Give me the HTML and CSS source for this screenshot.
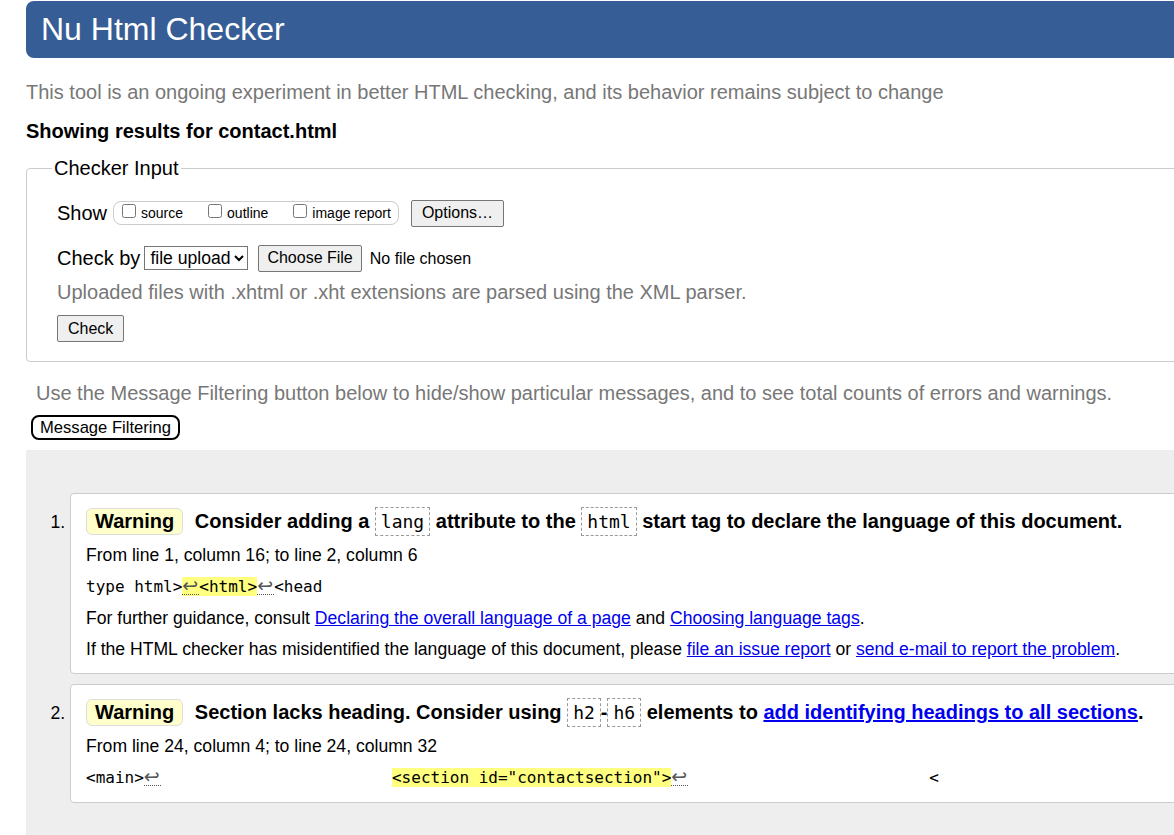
FILE: index.html
```html
<!DOCTYPE html>
<html>
<head>
<meta charset="utf-8">
<title>Nu Html Checker</title>
<link rel="stylesheet" href="styles.css">
</head>
<body>
<div class="page">
  <h1 class="banner">Nu Html Checker</h1>
  <p class="intro">This tool is an ongoing experiment in better HTML checking, and its behavior remains subject to change</p>
  <p class="showing">Showing results for contact.html</p>

  <fieldset class="input-box">
    <legend>Checker Input</legend>
    <div class="row show-row">
      <span class="row-label">Show</span>
      <span class="opts">
        <label><input type="checkbox"> source</label>
        <label><input type="checkbox"> outline</label>
        <label><input type="checkbox"> image report</label>
      </span>
      <button class="btn">Options…</button>
    </div>
    <div class="row check-row">
      <span class="row-label">Check by</span>
      <select class="sel"><option>file upload</option></select>
      <input type="file" class="file">
    </div>
    <p class="hint">Uploaded files with .xhtml or .xht extensions are parsed using the XML parser.</p>
    <button class="btn">Check</button>
  </fieldset>

  <p class="filter-note">Use the Message Filtering button below to hide/show particular messages, and to see total counts of errors and warnings.</p>
  <button class="mf-btn">Message Filtering</button>

  <div class="results">
    <ol class="msgs">
      <li class="msg">
        <p class="msg-title"><strong class="badge">Warning</strong> <span class="text">Consider adding a <code>lang</code> attribute to the <code>html</code> start tag to declare the language of this document.</span></p>
        <p class="loc">From line 1, column 16; to line 2, column 6</p>
        <p class="extract"><code>type html&gt;<b class="hl"><span class="lf">↩</span>&lt;html&gt;</b><span class="lf">↩</span>&lt;head</code></p>
        <p class="info">For further guidance, consult <a href="#">Declaring the overall language of a page</a> and <a href="#">Choosing language tags</a>.</p>
        <p class="info">If the HTML checker has misidentified the language of this document, please <a href="#">file an issue report</a> or <a href="#">send e-mail to report the problem</a>.</p>
      </li>
      <li class="msg">
        <p class="msg-title"><strong class="badge">Warning</strong> <span class="text">Section lacks heading. Consider using <code>h2</code>-<code>h6</code> elements to <a href="#">add identifying headings to all sections</a>.</span></p>
        <p class="loc">From line 24, column 4; to line 24, column 32</p>
        <p class="extract"><code>&lt;main&gt;<span class="lf">↩</span>                        <b class="hl">&lt;section id="contactsection"&gt;</b><span class="lf">↩</span>                         &lt;</code></p>
      </li>
    </ol>
  </div>
</div>
</body>
</html>
```

FILE: styles.css
```css
html {
  overflow: hidden;
}
body {
  margin: 0;
  font-family: "Liberation Sans", Arial, sans-serif;
  color: #000;
  background: #fff;
}
.page {
  width: 1300px;
  padding-left: 26px;
}
.banner {
  margin: 1px 0 0 0;
  height: 57px;
  line-height: 56px;
  background: #365d95;
  color: #fff;
  font-weight: normal;
  font-size: 32px;
  padding-left: 15px;
  border-radius: 8px;
}
.intro {
  margin: 22px 0 0 0;
  font-size: 20px;
  line-height: 24px;
  color: #777;
}
.showing {
  margin: 15px 0 0 0;
  font-size: 20px;
  line-height: 24px;
  font-weight: bold;
}
.input-box {
  margin: 13px 0 0 0;
  padding: 19px 30px 19px 30px;
  border: 1px solid #ccc;
  border-radius: 4px;
}
.input-box legend {
  font-size: 20px;
  padding: 0 2px;
  margin-left: -5px;
  line-height: 24px;
}
.row {
  display: flex;
  align-items: center;
}
.row-label {
  font-size: 20px;
  margin-right: 6px;
}
.show-row {
  height: 28px;
}
.opts {
  display: flex;
  align-items: center;
  border: 1px solid #ccc;
  border-radius: 8px;
  height: 22px;
  padding: 0 7px 0 8px;
  gap: 25px;
  font-size: 14px;
}
.opts label {
  display: flex;
  align-items: center;
}
.opts input {
  width: 14px;
  height: 14px;
  margin: 0 5px 5px 0;
}
.btn {
  font-family: "Liberation Sans", Arial, sans-serif;
  font-size: 16px;
  height: 27px;
  padding: 0 10px;
  border: 1px solid #767676;
  border-radius: 2px;
  background: #efefef;
  color: #000;
}
.show-row .btn {
  margin-left: 12px;
}
.check-row {
  margin-top: 18px;
  height: 26px;
}
.sel {
  font-family: "Liberation Sans", Arial, sans-serif;
  font-size: 17.6px;
  height: 24px;
  padding: 0 0 0 1px;
  border: 1px solid #767676;
  border-radius: 0;
  background: #fff;
  margin-right: 10px;
  margin-left: -2px;
}
.file {
  font-family: "Liberation Sans", Arial, sans-serif;
  font-size: 16px;
}
.file::file-selector-button {
  font-family: "Liberation Sans", Arial, sans-serif;
  font-size: 16px;
  height: 27px;
  padding: 0 8px;
  margin-right: 8px;
  border: 1px solid #767676;
  border-radius: 2px;
  background: #efefef;
}
.hint {
  margin: 9px 0 11px 0;
  font-size: 20px;
  line-height: 24px;
  color: #777;
}
.filter-note {
  margin: 19px 0 0 10px;
  font-size: 20px;
  line-height: 24px;
  color: #777;
}
.mf-btn {
  display: block;
  margin: 10px 0 0 5px;
  font-family: "Liberation Sans", Arial, sans-serif;
  font-size: 16.6px;
  height: 25px;
  padding: 0 7px;
  background: #fff;
  border: 2px solid #000;
  border-radius: 8px;
  color: #000;
}
.results {
  margin-top: 10px;
  background: #eee;
  padding: 43px 0 40px 0;
  min-height: 400px;
}
.msgs {
  margin: 0;
  padding: 0 0 0 44px;
}
.msg {
  background: #fff;
  border: 1px solid #ccc;
  border-radius: 4px;
  padding: 12px 15px 14px 15px;
  margin-bottom: 10px;
  font-size: 17.6px;
}
.msg::marker {
  font-family: "Liberation Sans", Arial, sans-serif;
  font-size: 17.6px;
}
.msg p {
  margin: 0;
}
.msg-title {
  font-size: 20px;
  line-height: 30px;
  font-weight: bold;
}
.badge {
  display: inline-block;
  background: #ffffcc;
  border: 1px solid #ddd;
  border-radius: 6px;
  padding: 0 8px;
  line-height: 25px;
  margin-right: 6px;
}
.msg-title code {
  font-family: "DejaVu Sans Mono", monospace;
  font-weight: normal;
  font-size: 18px;
  border: 1px dashed #999;
  padding: 3px 5px;
}
.msg-title a {
  color: #0000ee;
}
.loc {
  margin-top: 8px !important;
  line-height: 20px;
}
.extract {
  margin-top: 11px !important;
  line-height: 20px;
  white-space: pre;
}
.extract code {
  font-family: "DejaVu Sans Mono", monospace;
  font-size: 16px;
}
.hl {
  font-weight: normal;
  background: #ffff80;
}
.lf {
  display: inline-block;
  width: 17px;
  line-height: 18px;
  font-family: "DejaVu Sans", sans-serif;
  font-size: 19px;
  text-align: left;
  border-bottom: 1px dotted #555;
  color: #555;
}
.info {
  margin-top: 11px !important;
  line-height: 20px;
}
.info a {
  color: #0000ee;
}
```
